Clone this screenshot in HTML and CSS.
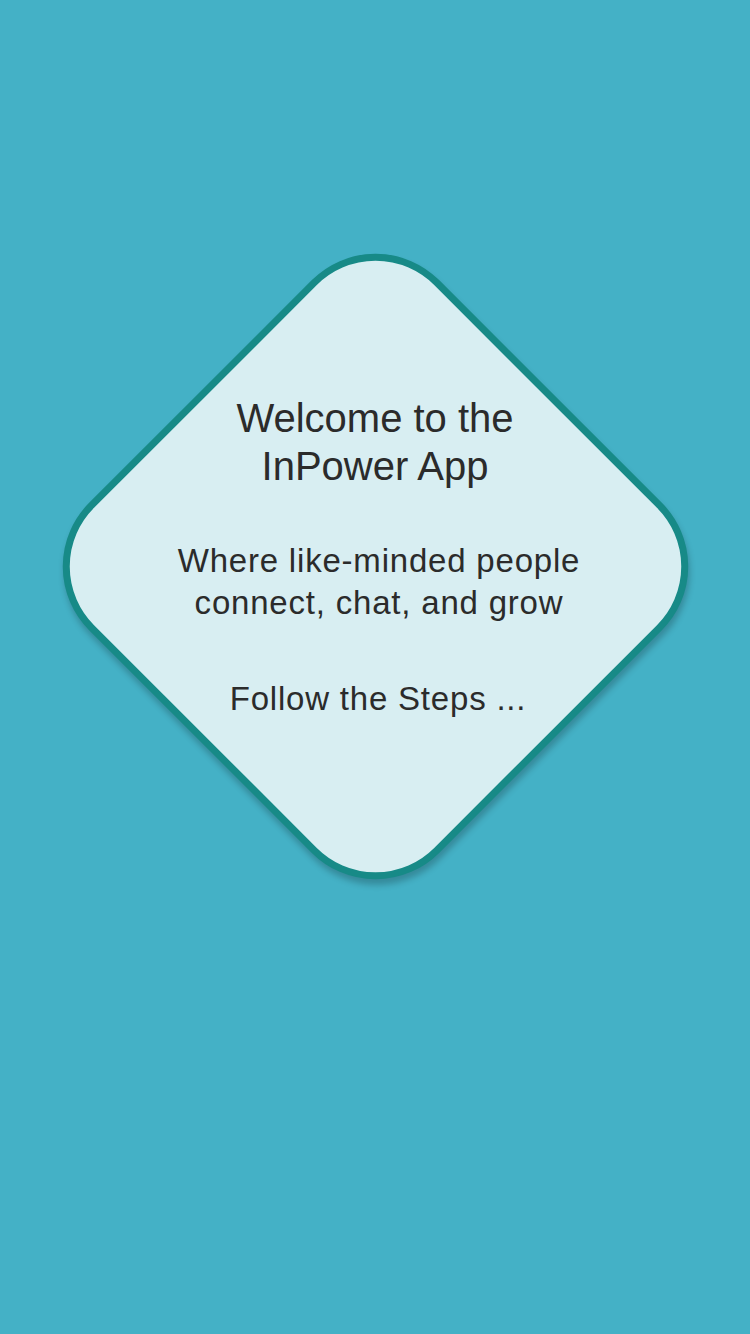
FILE: index.html
```html
<!DOCTYPE html>
<html lang="en">
<head>
  <meta charset="UTF-8" />
  <meta name="viewport" content="width=device-width, initial-scale=1" />
  <title>InPower App</title>
  <link rel="stylesheet" href="styles.css">
</head>
<body>
  <div class="stage">
    <div class="welcome">
      <h1 class="title">Welcome to the<br>InPower App</h1>
      <p class="tagline">Where like-minded people<br>connect, chat, and grow</p>
      <p class="steps">Follow the Steps ...</p>
    </div>
  </div>
</body>
</html>
```

FILE: styles.css
```css
/* Basic reset */
body, html {
  margin: 0;
  padding: 0;
  height: 100%;
  background-color: #44b1c6;
  font-family: 'Liberation Sans', Arial, sans-serif;
  color: #2b2b2b;
  overflow: hidden;
}

/* Diamond card area */
.stage {
  position: relative;
  margin-top: 253px;
  height: 627px;
  text-align: center;
}

/* Rounded square turned 45deg, sits behind the text */
.stage::before {
  content: "";
  position: absolute;
  left: 50%;
  top: 50%;
  width: 495px;
  height: 495px;
  margin: -247.5px 0 0 -247.5px;
  box-sizing: border-box;
  background-color: #d8eef2;
  border: 7px solid #178a87;
  border-radius: 90px;
  box-shadow: 5px 3px 6px rgba(0, 0, 0, 0.22);
  transform: rotate(45deg);
}

.welcome {
  position: relative;
  z-index: 1;
  padding-top: 141px;
}

.title {
  margin: 0;
  font-size: 40px;
  font-weight: normal;
  line-height: 48px;
}

.tagline {
  margin: 50px 0 0;
  padding-left: 8px;
  font-size: 33px;
  line-height: 42px;
  letter-spacing: 0.8px;
}

.steps {
  margin: 54px 0 0;
  padding-left: 6px;
  font-size: 33px;
  line-height: 42px;
  letter-spacing: 0.8px;
}
```
